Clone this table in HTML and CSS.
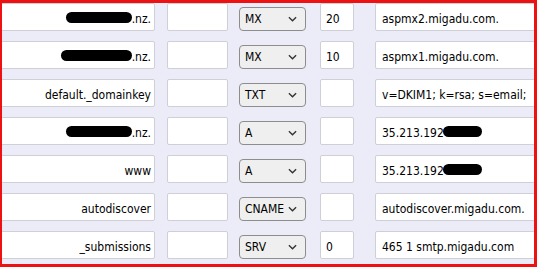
FILE: index.html
```html
<!DOCTYPE html>
<html>
<head>
<meta charset="utf-8">
<link rel="stylesheet" href="styles.css">
</head>
<body>
<div class="frame">
  <div class="records">
    <div class="field name"><span class="redact r-wide"></span>.nz.</div>
    <div class="field ttl"></div>
    <div class="select"><span>MX</span><svg class="chev" viewBox="0 0 10 6" width="9" height="6"><path d="M1 1l4 4 4-4"/></svg></div>
    <div class="field prio">20</div>
    <div class="field value">aspmx2.migadu.com.</div>

    <div class="field name"><span class="redact r-wider"></span>.nz.</div>
    <div class="field ttl"></div>
    <div class="select"><span>MX</span><svg class="chev" viewBox="0 0 10 6" width="9" height="6"><path d="M1 1l4 4 4-4"/></svg></div>
    <div class="field prio">10</div>
    <div class="field value">aspmx1.migadu.com.</div>

    <div class="field name">default._domainkey</div>
    <div class="field ttl"></div>
    <div class="select"><span>TXT</span><svg class="chev" viewBox="0 0 10 6" width="9" height="6"><path d="M1 1l4 4 4-4"/></svg></div>
    <div class="field prio"></div>
    <div class="field value">v=DKIM1; k=rsa; s=email;</div>

    <div class="field name"><span class="redact r-wide"></span>.nz.</div>
    <div class="field ttl"></div>
    <div class="select"><span>A</span><svg class="chev" viewBox="0 0 10 6" width="9" height="6"><path d="M1 1l4 4 4-4"/></svg></div>
    <div class="field prio"></div>
    <div class="field value">35.213.192<span class="redact r-ip"></span></div>

    <div class="field name">www</div>
    <div class="field ttl"></div>
    <div class="select"><span>A</span><svg class="chev" viewBox="0 0 10 6" width="9" height="6"><path d="M1 1l4 4 4-4"/></svg></div>
    <div class="field prio"></div>
    <div class="field value">35.213.192<span class="redact r-ip"></span></div>

    <div class="field name">autodiscover</div>
    <div class="field ttl"></div>
    <div class="select"><span>CNAME</span><svg class="chev" viewBox="0 0 10 6" width="9" height="6"><path d="M1 1l4 4 4-4"/></svg></div>
    <div class="field prio"></div>
    <div class="field value">autodiscover.migadu.com.</div>

    <div class="field name">_submissions</div>
    <div class="field ttl"></div>
    <div class="select"><span>SRV</span><svg class="chev" viewBox="0 0 10 6" width="9" height="6"><path d="M1 1l4 4 4-4"/></svg></div>
    <div class="field prio">0</div>
    <div class="field value">465 1 smtp.migadu.com</div>
  </div>
  <div class="annotation"></div>
</div>
</body>
</html>
```

FILE: styles.css
```css
html, body {
  margin: 0;
  padding: 0;
  background: #ffffff;
}

.frame {
  position: relative;
  width: 537px;
  height: 267px;
  overflow: hidden;
  background: #ececf8;
  font-family: "DejaVu Sans Condensed", "DejaVu Sans", sans-serif;
  font-size: 12px;
  color: #000000;
}

.records {
  display: grid;
  grid-template-columns: 155px 73px 78px 48px 1fr;
  grid-auto-rows: 28px;
  row-gap: 10px;
  padding-top: 3px;
}

.field {
  box-sizing: border-box;
  height: 28px;
  background: #ffffff;
  border: 1px solid #cfcfd8;
  border-radius: 2px;
  display: flex;
  align-items: center;
  padding: 3px 4px 0;
  white-space: nowrap;
}

.name {
  justify-content: flex-end;
  padding-right: 3px;
}

.ttl {
  justify-self: end;
  width: 61px;
}

.prio {
  justify-self: end;
  width: 34px;
  padding-left: 5px;
}

.value {
  justify-self: start;
  margin-left: 21px;
  width: 200px;
  padding-left: 6px;
}

.select {
  justify-self: end;
  align-self: center;
  box-sizing: border-box;
  width: 67px;
  height: 24px;
  margin-top: 3px;
  background: #efefef;
  border: 1px solid #8d8d8d;
  border-radius: 4px;
  display: flex;
  align-items: center;
  justify-content: space-between;
  padding: 1px 8px 0 5px;
}

.chev {
  fill: none;
  stroke: #333333;
  stroke-width: 1.5;
}

.redact {
  display: inline-block;
  height: 11px;
  margin-top: -2px;
  background: #000000;
  border-radius: 6px;
}

.r-wide { width: 66px; }
.r-wider { width: 71px; }
.r-ip { width: 39px; margin-left: -1px; }

.annotation {
  position: absolute;
  inset: 0;
  border-style: solid;
  border-color: #ee1111;
  border-width: 3px 3px 3px 2px;
  pointer-events: none;
}
```
